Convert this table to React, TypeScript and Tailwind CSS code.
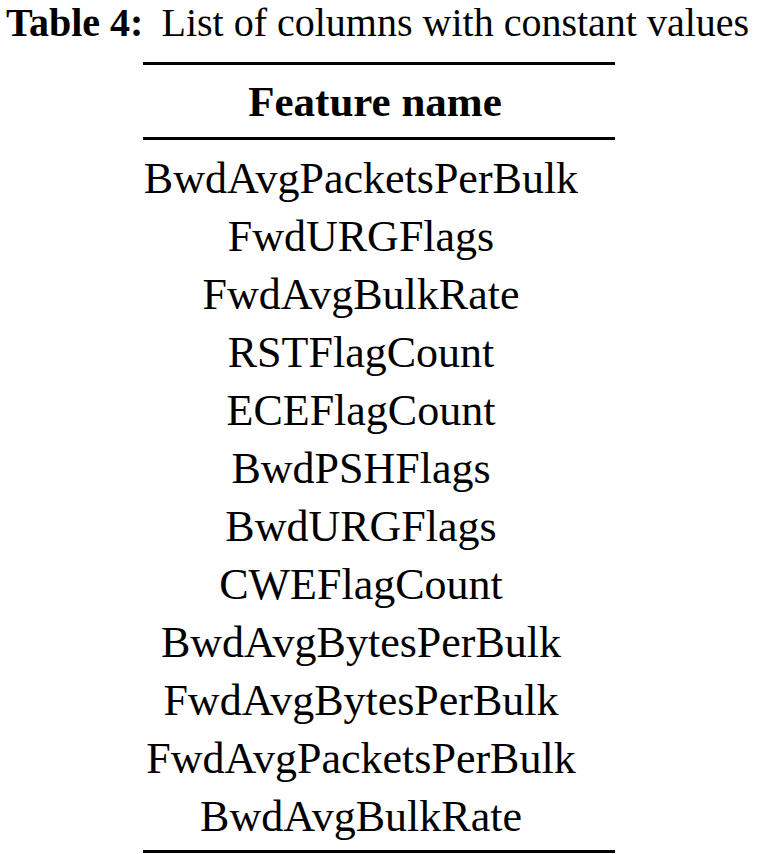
const features = [
  'BwdAvgPacketsPerBulk',
  'FwdURGFlags',
  'FwdAvgBulkRate',
  'RSTFlagCount',
  'ECEFlagCount',
  'BwdPSHFlags',
  'BwdURGFlags',
  'CWEFlagCount',
  'BwdAvgBytesPerBulk',
  'FwdAvgBytesPerBulk',
  'FwdAvgPacketsPerBulk',
  'BwdAvgBulkRate',
]

const App = () => {
  return (
    <div className="flex w-[758px] flex-col items-center bg-white font-['Liberation_Serif',serif] text-black">
      <div className="flex h-[62px] w-full items-start whitespace-nowrap pl-[6px] text-[40px] leading-[46px]">
        <span className="font-bold">Table 4:</span>
        <span className="ml-[18px]">List of columns with constant values</span>
      </div>
      <table className="w-[472px] border-collapse border-y-[3px] border-black text-center">
        <thead>
          <tr className="border-b-[3px] border-black">
            <th className="h-[75px] pr-[8px] text-[43px] font-bold leading-[43px]">Feature name</th>
          </tr>
        </thead>
        <tbody>
          {features.map((name, i) => (
            <tr key={name}>
              <td
                className={`pr-[36px] text-[44px] leading-[58px] ${i === 0 ? 'pt-[10px]' : ''} ${
                  i === features.length - 1 ? 'pb-[4px]' : ''
                }`}
              >
                {name}
              </td>
            </tr>
          ))}
        </tbody>
      </table>
    </div>
  )
}

export default App
